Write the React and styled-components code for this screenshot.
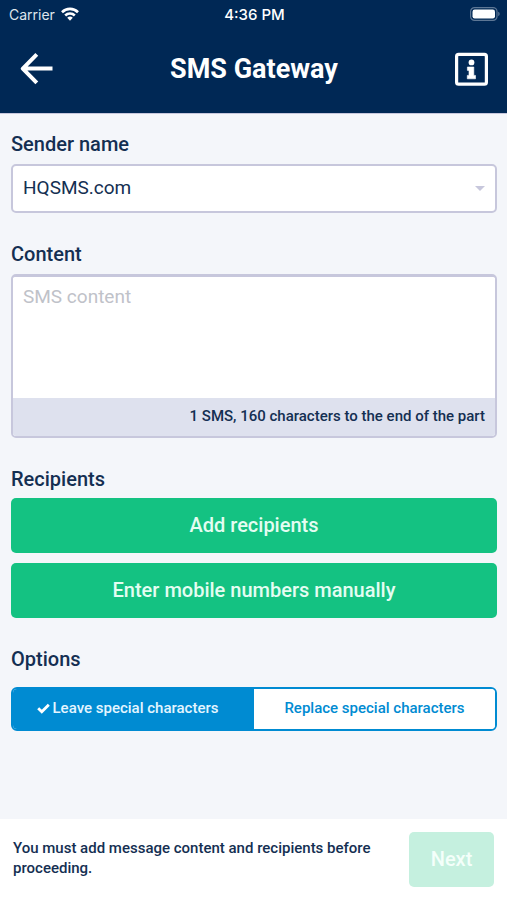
import React, { useState } from "react";
import styled, { createGlobalStyle, css } from "styled-components";

const color = {
  navy: "#002855",
  text: "#142f52",
  page: "#f4f6fa",
  line: "#c7c7dc",
  strip: "#dee1ee",
  green: "#14c282",
  greenOff: "#c5f0df",
  blue: "#008bd2",
};

const GlobalStyle = createGlobalStyle`
  *, *::before, *::after { box-sizing: border-box; }
  body {
    margin: 0;
    background: ${color.page};
    color: ${color.text};
    font-family: Roboto, "Liberation Sans", sans-serif;
  }
`;

const Screen = styled.div`
  display: flex;
  flex-direction: column;
  min-height: 100vh;
`;

const Header = styled.header`
  background: ${color.navy};
  border-bottom: 1px solid ${color.line};
  color: #fff;
`;

const StatusBar = styled.div`
  display: grid;
  grid-template-columns: 1fr auto 1fr;
  align-items: center;
  height: 28px;
  padding: 0 7px 0 9px;
  font-family: Inter, sans-serif;
  font-size: 14px;
`;

const Carrier = styled.span`
  display: flex;
  align-items: center;
  gap: 6px;
  color: #dfe5ec;
`;

const Clock = styled.span`
  font-size: 15px;
  font-weight: 500;
`;

const Battery = styled.svg`
  justify-self: end;
`;

const TitleBar = styled.div`
  display: grid;
  grid-template-columns: 1fr auto 1fr;
  align-items: center;
  height: 85px;
  padding: 0 19px 4px 20px;
`;

const Title = styled.h1`
  margin: 0;
  font-size: 27px;
  line-height: 32px;
  font-weight: 700;
`;

const IconButton = styled.button`
  display: flex;
  justify-self: ${({ $end }) => ($end ? "end" : "start")};
  padding: 0;
  border: 0;
  background: none;
  color: #fff;
  cursor: pointer;
`;

const Form = styled.main`
  display: flex;
  flex: 1;
  flex-direction: column;
  gap: 29px;
  padding: 18px 10px 29px 11px;
`;

const Field = styled.div`
  display: flex;
  flex-direction: column;
  gap: ${({ $gap }) => $gap || 8}px;
`;

const labelStyle = css`
  font-size: 20px;
  line-height: 24px;
  font-weight: 500;
`;

const Label = styled.label`
  ${labelStyle}
`;

const GroupTitle = styled.h2`
  ${labelStyle}
  margin: 0;
`;

const SelectBox = styled.div`
  display: grid;
  align-items: center;
  height: 49px;
  border: 2px solid ${color.line};
  border-radius: 5px;
  background: #fff;

  > * { grid-area: 1 / 1; }
`;

const Select = styled.select`
  width: 100%;
  height: 100%;
  padding: 0 32px 2px 10px;
  border: 0;
  border-radius: 3px;
  appearance: none;
  background: none;
  color: ${color.text};
  font: 400 19px/24px Roboto, sans-serif;
`;

const Caret = styled.svg`
  justify-self: end;
  margin-right: 10px;
  pointer-events: none;
`;

const MessageBox = styled.div`
  overflow: hidden;
  border: 2px solid ${color.line};
  border-top-width: 3px;
  border-radius: 5px;
  background: #fff;
`;

const MessageInput = styled.textarea`
  display: block;
  width: 100%;
  height: 121px;
  padding: 8px 10px;
  border: 0;
  outline: 0;
  resize: none;
  background: #fff;
  color: ${color.text};
  font: 400 19px/24px Roboto, sans-serif;

  &::placeholder { color: #bfc2c9; opacity: 1; }
`;

const Counter = styled.div`
  padding: 8px 10px 10px;
  background: ${color.strip};
  font-size: 15px;
  line-height: 20px;
  font-weight: 500;
  text-align: right;
`;

const ButtonStack = styled.div`
  display: flex;
  flex-direction: column;
  gap: 10px;
`;

const Button = styled.button`
  height: 55px;
  padding: 0 20px 2px;
  border: 0;
  border-radius: 5px;
  background: ${color.green};
  color: #e4fdf2;
  font: 500 20px/24px Roboto, sans-serif;
  cursor: pointer;

  &:disabled {
    background: ${color.greenOff};
    color: #f4fffa;
    cursor: default;
  }
`;

const Segments = styled.div`
  display: grid;
  grid-template-columns: 1fr 1fr;
  overflow: hidden;
  height: 44px;
  border: 2px solid ${color.blue};
  border-radius: 6px;
  background: #fff;
`;

const Segment = styled.label`
  display: flex;
  align-items: center;
  justify-content: center;
  padding: 0 ${({ $on }) => ($on ? 12 : 0)}px 2px 0;
  background: ${({ $on }) => ($on ? color.blue : "#fff")};
  color: ${({ $on }) => ($on ? "#e3f5ff" : color.blue)};
  font-size: 15px;
  line-height: 20px;
  font-weight: 500;
  cursor: pointer;

  &:has(:focus-visible) { text-decoration: underline; }
`;

const Radio = styled.input`
  appearance: none;
  width: 0;
  height: 0;
  margin: 0;
  outline: 0;
`;

const Check = styled.svg`
  margin-right: 3px;
`;

const Footer = styled.footer`
  position: sticky;
  bottom: 0;
  display: flex;
  align-items: flex-start;
  justify-content: space-between;
  gap: 32px;
  padding: 13px;
  background: #fff;
`;

const Hint = styled.p`
  flex: 1;
  margin: 0;
  padding-top: 6px;
  font-size: 15px;
  line-height: 20px;
  font-weight: 500;
`;

const NextButton = styled(Button)`
  width: 85px;
`;

function WifiIcon() {
  return (
    <svg width="18" height="14" viewBox="0 0 18 14" aria-hidden="true">
      <g fill="none" stroke="#fff" strokeWidth="2.6">
        <path d="M1 5.2a11.4 11.4 0 0 1 16 0" />
        <path d="M4.2 8.5a6.9 6.9 0 0 1 9.6 0" />
      </g>
      <path d="M6.2 10.8a4 4 0 0 1 5.6 0L9 13.7z" fill="#fff" />
    </svg>
  );
}

function BatteryIcon() {
  return (
    <Battery width="30" height="14" viewBox="0 0 30 14" role="img" aria-label="Battery full">
      <rect x=".6" y=".6" width="26.4" height="12.8" rx="4" fill="none" stroke="#5d7795" strokeWidth="1.2" />
      <rect x="2.5" y="2.5" width="22.5" height="9" rx="2.2" fill="#fff" />
      <path d="M28.2 4.8v4.4q1.5-.6 1.5-2.2t-1.5-2.2z" fill="#5d7795" />
    </Battery>
  );
}

function BackIcon() {
  return (
    <svg width="34" height="34" viewBox="0 0 34 34" aria-hidden="true">
      <path
        d="M16.8 2.4 2.8 16.6l14 14.2M3 16.6h29.5"
        fill="none"
        stroke="#fff"
        strokeWidth="4"
        strokeLinejoin="round"
      />
    </svg>
  );
}

function InfoIcon() {
  return (
    <svg width="33" height="34" viewBox="0 0 33 34" aria-hidden="true">
      <rect x="1.6" y="2.4" width="29.8" height="29.8" rx="2" fill="none" stroke="#fff" strokeWidth="3.2" />
      <circle cx="16.5" cy="10.4" r="2.9" fill="#fff" />
      <path d="M12.4 15h6.4v8.4h1.7v3.4h-8.2v-3.4H14v-5h-1.6z" fill="#fff" stroke="#fff" strokeWidth=".6" strokeLinejoin="round" />
    </svg>
  );
}

function CheckIcon() {
  return (
    <Check width="13" height="11" viewBox="0 0 13 11" aria-hidden="true">
      <path d="M1.2 5.2 4.8 8.8l7-7" fill="none" stroke="#fff" strokeWidth="2.8" />
    </Check>
  );
}

const options = [
  { value: "leave", label: "Leave special characters" },
  { value: "replace", label: "Replace special characters" },
];

export default function App() {
  const [content, setContent] = useState("");
  const [option, setOption] = useState("leave");

  return (
    <Screen>
      <GlobalStyle />
      <Header>
        <StatusBar>
          <Carrier>
            Carrier
            <WifiIcon />
          </Carrier>
          <Clock>4:36 PM</Clock>
          <BatteryIcon />
        </StatusBar>
        <TitleBar>
          <IconButton type="button" aria-label="Back">
            <BackIcon />
          </IconButton>
          <Title>SMS Gateway</Title>
          <IconButton type="button" aria-label="Information" $end>
            <InfoIcon />
          </IconButton>
        </TitleBar>
      </Header>

      <Form>
        <Field>
          <Label htmlFor="sender">Sender name</Label>
          <SelectBox>
            <Select id="sender" defaultValue="HQSMS.com">
              <option>HQSMS.com</option>
            </Select>
            <Caret width="10" height="5" viewBox="0 0 10 5" aria-hidden="true">
              <path d="M0 0h10L5 5z" fill={color.line} />
            </Caret>
          </SelectBox>
        </Field>

        <Field>
          <Label htmlFor="content">Content</Label>
          <MessageBox>
            <MessageInput
              id="content"
              placeholder="SMS content"
              value={content}
              onChange={(event) => setContent(event.target.value)}
            />
            <Counter>1 SMS, 160 characters to the end of the part</Counter>
          </MessageBox>
        </Field>

        <Field $gap={7}>
          <GroupTitle>Recipients</GroupTitle>
          <ButtonStack>
            <Button type="button">Add recipients</Button>
            <Button type="button">Enter mobile numbers manually</Button>
          </ButtonStack>
        </Field>

        <Field $gap={16}>
          <GroupTitle id="options-title">Options</GroupTitle>
          <Segments role="radiogroup" aria-labelledby="options-title">
            {options.map(({ value, label }) => (
              <Segment key={value} $on={option === value}>
                <Radio
                  type="radio"
                  name="characters"
                  value={value}
                  checked={option === value}
                  onChange={() => setOption(value)}
                />
                {option === value && <CheckIcon />}
                {label}
              </Segment>
            ))}
          </Segments>
        </Field>
      </Form>

      <Footer>
        <Hint>You must add message content and recipients before proceeding.</Hint>
        <NextButton type="button" disabled>
          Next
        </NextButton>
      </Footer>
    </Screen>
  );
}
